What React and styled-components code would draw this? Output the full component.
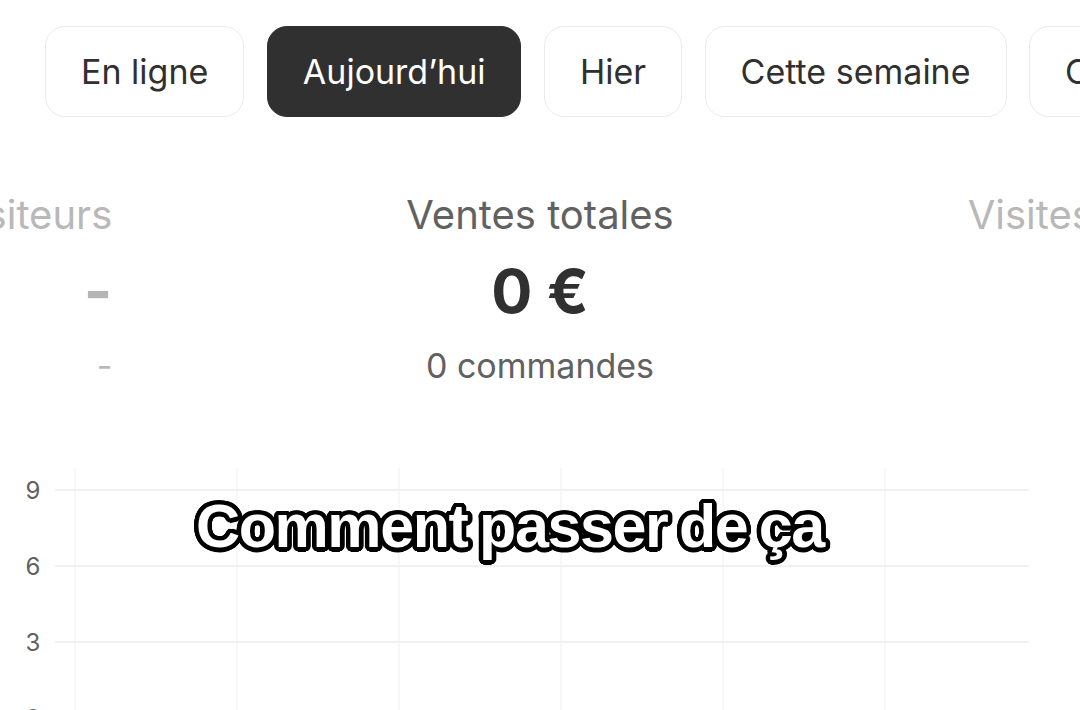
import React from "react";
import styled, {createGlobalStyle} from "styled-components";

const GlobalStyle = createGlobalStyle`
    html, body {
        margin: 0;
        padding: 0;
        background: #ffffff;
    }
    body {
        font-family: "Inter", "Noto Sans", sans-serif;
        color: #303030;
    }
`;

const Screen = styled.div`
    width: 1080px;
    height: 710px;
    overflow: hidden;
    background: #ffffff;
    display: flex;
    flex-direction: column;
`;

const Tabs = styled.div`
    display: flex;
    gap: 22.5px;
    padding: 26px 0 0 45px;
`;

const Tab = styled.div`
    flex-shrink: 0;
    height: 91px;
    box-sizing: border-box;
    padding: 0 35px;
    display: flex;
    align-items: center;
    border-radius: 20px;
    border: 1.5px solid ${({$active}) => ($active ? "#303030" : "#ebebeb")};
    background: ${({$active}) => ($active ? "#303030" : "#ffffff")};
    color: ${({$active}) => ($active ? "#ffffff" : "#303030")};
    font-size: 34px;
    font-weight: 400;
    white-space: nowrap;
`;

const Stats = styled.div`
    display: grid;
    grid-template-columns: 1fr auto 1fr;
    column-gap: 294px;
    margin-top: 74px;
`;

const Stat = styled.div`
    display: flex;
    flex-direction: column;
    align-items: ${({$align}) => $align};
    min-width: 0;
    white-space: nowrap;
`;

const StatTitle = styled.div`
    font-size: 40px;
    line-height: 48px;
    color: ${({$muted}) => ($muted ? "#b8b8b8" : "#616161")};
`;

const StatValue = styled.div`
    font-size: 61px;
    line-height: 72px;
    font-weight: 700;
    margin-top: 16px;
    color: ${({$muted}) => ($muted ? "#b5b5b5" : "#303030")};
    min-height: 72px;
`;

const StatSub = styled.div`
    font-size: 34px;
    line-height: 40px;
    margin-top: 19px;
    color: ${({$muted}) => ($muted ? "#b8b8b8" : "#616161")};
`;

const ChartWrap = styled.div`
    position: relative;
    margin-top: 74px;
    height: 260px;
`;

const ChartSvg = styled.svg`
    display: block;
`;

const AxisLabel = styled.text`
    font-family: "Inter", "Noto Sans", sans-serif;
    font-size: 24px;
    fill: #616161;
`;

const Caption = styled.div`
    position: absolute;
    left: 196px;
    top: 30px;
    font-family: "Liberation Sans", Arial, sans-serif;
    font-weight: 700;
    font-size: 61px;
    line-height: 72px;
    letter-spacing: -1.4px;
    word-spacing: -4px;
    color: #ffffff;
    white-space: nowrap;
    text-shadow: ${() => {
        const r = 4.5;
        const out = [];
        for (let i = 0; i < 24; i++) {
            const a = (i / 24) * Math.PI * 2;
            out.push(`${(Math.cos(a) * r).toFixed(2)}px ${(Math.sin(a) * r).toFixed(2)}px 0 #000`);
        }
        return out.join(", ");
    }};
`;

const tabs = ["En ligne", "Aujourd\u2019hui", "Hier", "Cette semaine", "Ce mois-ci"];

const Chart = () => {
  const rows = [{label: "9", y: 30}, {label: "6", y: 106}, {label: "3", y: 182}, {label: "0", y: 258}];
  const cols = [75, 237, 399, 561, 723, 885];
  return (
    <ChartSvg width="1080" height="260" viewBox="0 0 1080 260">
      {cols.map(x => (
        <line key={x} x1={x} y1="8" x2={x} y2="260" stroke="#f4f4f4" strokeWidth="1.5"/>
      ))}
      {rows.map(r => (
        <g key={r.label}>
          <line x1="55" y1={r.y} x2="1029" y2={r.y} stroke="#ececec" strokeWidth="1.5"/>
          <AxisLabel x="33" y={r.y + 9} textAnchor="middle">{r.label}</AxisLabel>
        </g>
      ))}
    </ChartSvg>
  );
};

const App = () => {
  return (<>
    <GlobalStyle/>
    <Screen>
      <Tabs>
        {tabs.map(t => <Tab key={t} $active={t === "Aujourd\u2019hui"}>{t}</Tab>)}
      </Tabs>
      <Stats>
        <Stat $align="flex-end">
          <StatTitle $muted>Visiteurs</StatTitle>
          <StatValue $muted>-</StatValue>
          <StatSub $muted>-</StatSub>
        </Stat>
        <Stat $align="center">
          <StatTitle>Ventes totales</StatTitle>
          <StatValue>0 €</StatValue>
          <StatSub>0 commandes</StatSub>
        </Stat>
        <Stat $align="flex-start">
          <StatTitle $muted>Visites de la boutique</StatTitle>
        </Stat>
      </Stats>
      <ChartWrap>
        <Chart/>
        <Caption>Comment passer de ça</Caption>
      </ChartWrap>
    </Screen>
  </>);
}

export default App;
